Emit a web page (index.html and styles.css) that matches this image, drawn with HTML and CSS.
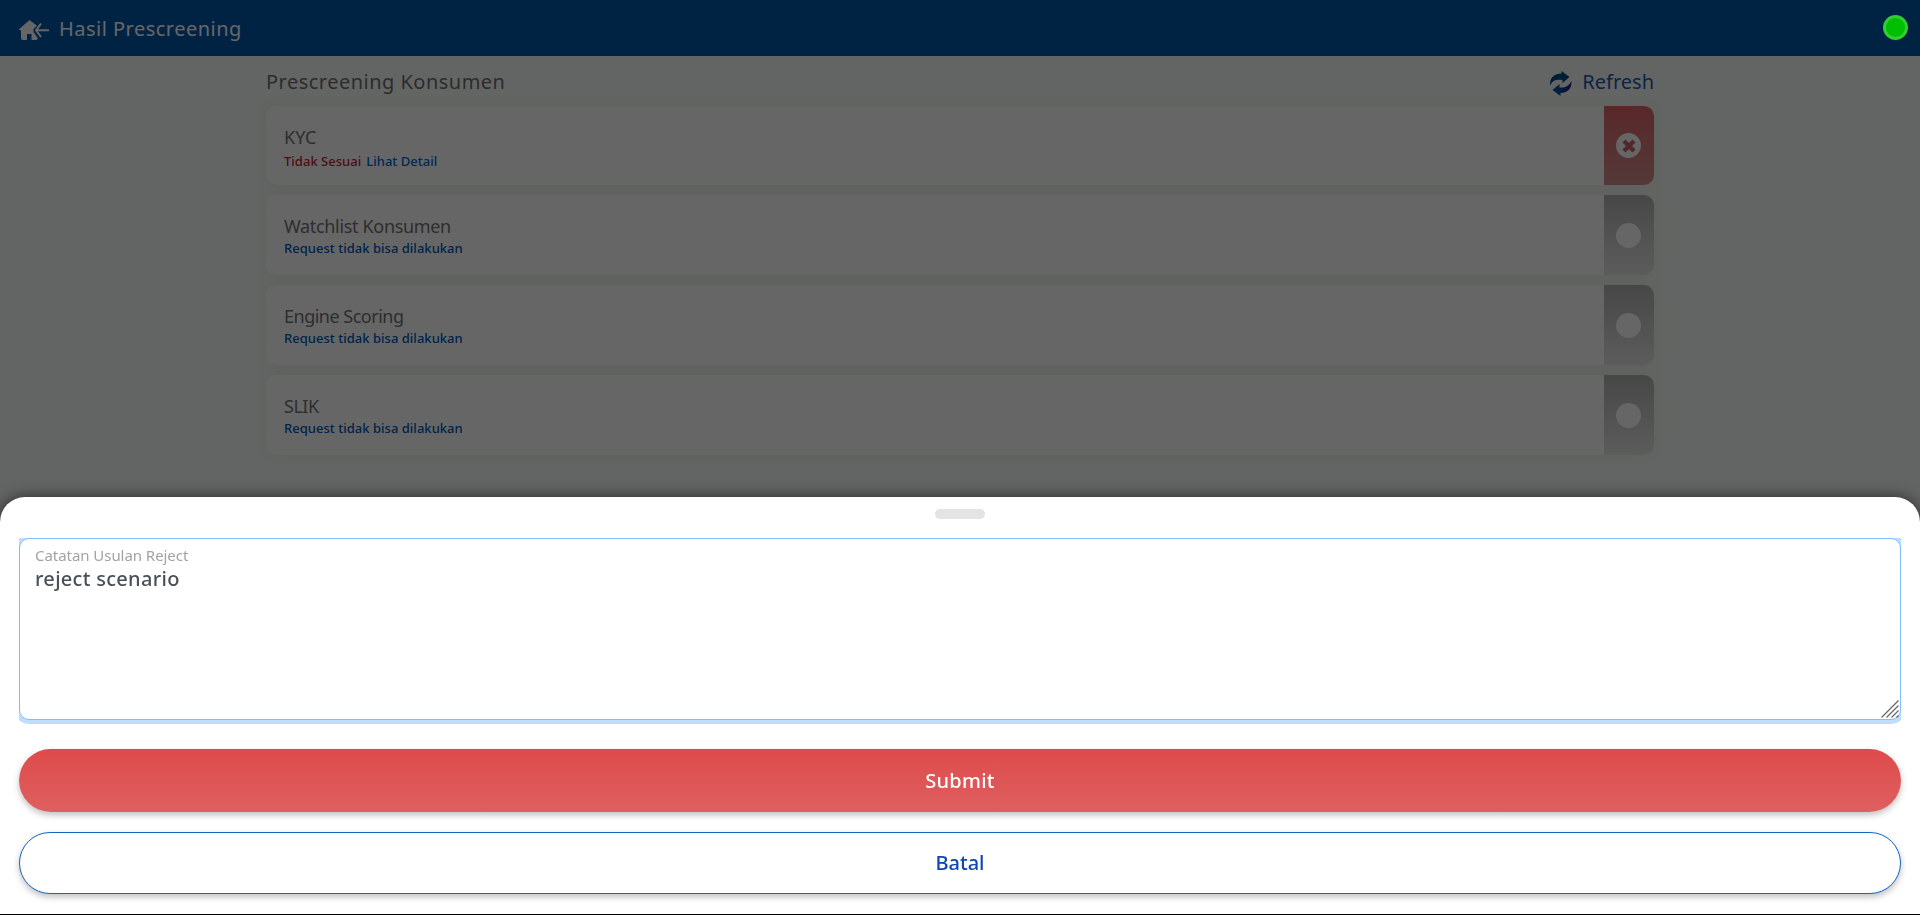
FILE: index.html
```html
<!DOCTYPE html>
<html lang="id">
<head>
<meta charset="utf-8">
<title>Hasil Prescreening</title>
<link rel="stylesheet" href="styles.css">
</head>
<body>
<header class="appbar">
  <svg class="home-icon" viewBox="0 0 30 20" width="30" height="20"><path d="M10.500 0 0 9.200Q-.2 10.500 2 10.500V18.300Q2 20 3.700 20H8V14H12.500V20H17.500L19 18.500 14.500 12V9L18 5.800Z" fill="currentColor"/><path d="M22 3.500 17 10.300 22 17M17 10.300H30" fill="none" stroke="currentColor" stroke-width="2"/></svg>
  <h1 class="appbar-title">Hasil Prescreening</h1>
</header>
<main class="content">
  <div class="heading-row">
    <h2 class="heading">Prescreening Konsumen</h2>
    <a class="refresh">
      <svg viewBox="0 0 22 25" width="22" height="25"><defs><linearGradient id="rg" x1="0" x2="1" y1="0" y2="0"><stop offset="0" stop-color="#00589f"/><stop offset=".55" stop-color="#123c9a"/><stop offset="1" stop-color="#33109a"/></linearGradient></defs><path d="M0 15C-.5 7 4 2.500 11.500 2.500V0L19.500 6 12.500 12V9C6 8 2 9.500 0 15Z" fill="#00497f"/><path d="M21.500 10C22 18 17 22 10.500 22V25L2.500 19 9.500 13V16.500C15 17 19 15 21.500 10Z" fill="url(#rg)"/></svg>
      <span class="refresh-label">Refresh</span>
    </a>
  </div>
  <section class="cards">
    <article class="card">
      <div class="card-body kyc"><h3 class="card-title">KYC</h3><p class="card-note"><span class="fail">Tidak Sesuai</span><span class="link">Lihat Detail</span></p></div>
      <div class="status failed"><span class="dot"><svg viewBox="0 0 14 14" width="14" height="14"><path d="M2 2 12 12M12 2 2 12" stroke="#cc6266" stroke-width="4.400"/></svg></span></div>
    </article>
    <article class="card">
      <div class="card-body"><h3 class="card-title">Watchlist Konsumen</h3><p class="card-note">Request tidak bisa dilakukan</p></div>
      <div class="status"><span class="dot"></span></div>
    </article>
    <article class="card">
      <div class="card-body"><h3 class="card-title engine">Engine Scoring</h3><p class="card-note">Request tidak bisa dilakukan</p></div>
      <div class="status"><span class="dot"></span></div>
    </article>
    <article class="card">
      <div class="card-body"><h3 class="card-title engine">SLIK</h3><p class="card-note">Request tidak bisa dilakukan</p></div>
      <div class="status"><span class="dot"></span></div>
    </article>
  </section>
</main>
<div class="backdrop"></div>
<span class="online"></span>
<section class="sheet">
  <div class="grip"></div>
  <div class="field-wrap">
    <label class="field">
      <span class="field-label">Catatan Usulan Reject</span>
      <textarea class="field-input">reject scenario</textarea>
      <svg class="resizer" viewBox="0 0 18 18" width="18" height="18"><path d="M.5 17.500 17.500 .5M5.500 17.500 17.500 5.500M10.500 17.500 17.500 10.500M15.500 17.500 17.500 15.500" stroke="#66666a" stroke-width="1.200"/></svg>
    </label>
  </div>
  <button class="btn submit">Submit</button>
  <button class="btn cancel">Batal</button>
</section>
</body>
</html>
```
FILE: styles.css
```css
* { box-sizing: border-box; }
body { margin: 0; height: 915px; overflow: hidden; background: #f8fdf9; font-family: "Noto Sans", sans-serif; color: #495057; }
h1, h2, h3, p { margin: 0; }
.appbar { height: 56px; padding: 2px 19px 0; display: flex; align-items: center; gap: 10px; background: #0058aa; color: #fff; }
.home-icon { margin-top: 2px; }
.appbar-title { font-size: 20px; font-weight: 450; letter-spacing: .48px; line-height: 28px; }
.content { width: 1388px; margin: 0 auto; }
.heading-row { height: 50px; display: flex; justify-content: space-between; align-items: center; }
.heading { font-size: 20px; font-weight: 450; letter-spacing: .48px; color: #6e6e6e; }
.refresh { display: flex; align-items: center; gap: 10px; color: #1c5ab0; font-size: 20px; }
.refresh svg { margin-top: 4px; }
.cards { display: grid; gap: 10px; }
.card { height: 80px; display: flex; border-radius: 10px; background: #fff; box-shadow: 0 0 15px rgba(120, 140, 80, .12); }
.card:first-child { height: 79px; }
.card-body { flex: 1; padding: 19px 18px; }
.card-title { font-size: 18px; font-weight: 400; letter-spacing: -.33px; line-height: 25px; color: #737373; }
.card-title.engine { letter-spacing: -.5px; }
.kyc .card-title { letter-spacing: 0; }
.card-note { font-size: 13px; font-weight: 500; letter-spacing: .02px; line-height: 19px; color: #0057b8; display: flex; gap: 5px; }
.kyc .card-note { margin-top: 2px; }
.fail { color: #c01f38; }
.link { color: #0069d2; }
.status { width: 50px; display: flex; align-items: center; justify-content: center; border-radius: 0 10px 10px 0; background: linear-gradient(#b2b2b2, #e6e6e6); }
.failed { background: linear-gradient(#df6467, #d48e91); }
.dot { width: 25px; height: 25px; margin-right: 1px; display: flex; align-items: center; justify-content: center; border-radius: 50%; background: #fff; }
.backdrop { position: fixed; inset: 0; background: rgba(0, 0, 0, .6); }
.online { position: absolute; left: 1883px; top: 15px; width: 25px; height: 25px; border: 3px solid #32cd32; border-radius: 50%; background: #00be00; }
.sheet { position: fixed; left: 0; right: 0; bottom: 1px; height: 417px; padding: 12px 19px 19px; border-radius: 25px 25px 0 0; background: #fff; box-shadow: 0 0 15px rgba(0, 0, 0, .6), 0 1px 0 #000; display: flex; flex-direction: column; }
.grip { width: 50px; height: 10px; flex: none; align-self: center; border-radius: 5px; background: #e4e4e4; }
.field-wrap { height: 186px; flex: none; margin-top: 19px; overflow: hidden; }
.field { position: relative; height: 182px; padding: 6px 15px; display: flex; flex-direction: column; border: 1px solid #80bdff; border-radius: 10px; background: #fff; box-shadow: 0 0 0 4px #bfdeff; }
.field-label { font-size: 15px; letter-spacing: -.05px; line-height: 20px; color: #a3a3a3; }
.field-input { flex: 1; padding: 0; border: 0; outline: 0; resize: none; font: 500 20px/27px "Noto Sans", sans-serif; letter-spacing: .3px; color: #495057; background: transparent; }
.resizer { position: absolute; right: 1px; bottom: 1px; }
.btn { flex: none; display: block; border-radius: 32px; font: 500 20px/28px "Noto Sans", sans-serif; box-shadow: 0 3px 6px rgba(0, 0, 0, .25); }
.submit { height: 63px; margin-top: 25px; border: 0; letter-spacing: .25px; color: #fff; background: linear-gradient(#df4b4b, #de5f60); }
.cancel { height: 62px; margin-top: 20px; border: 1px solid #1565c0; color: #0d47b1; background: #fff; }
```
